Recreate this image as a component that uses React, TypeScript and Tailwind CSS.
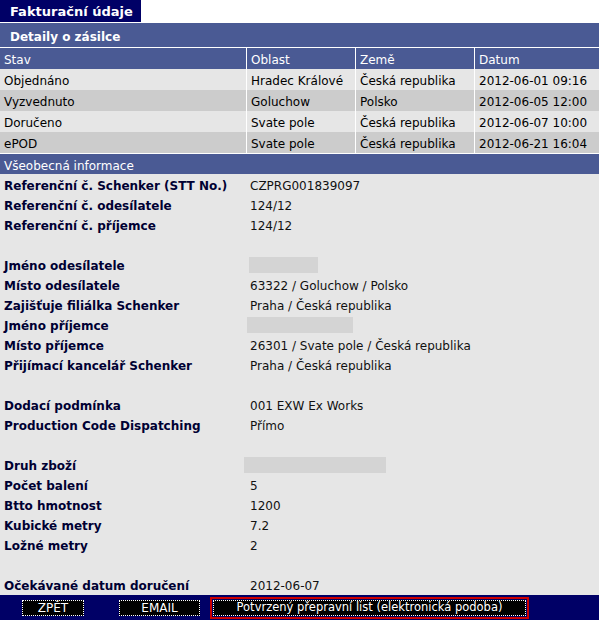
import React from "react";

const rows = [
  ["Objednáno", "Hradec Králové", "Česká republika", "2012-06-01 09:16"],
  ["Vyzvednuto", "Goluchow", "Polsko", "2012-06-05 12:00"],
  ["Doručeno", "Svate pole", "Česká republika", "2012-06-07 10:00"],
  ["ePOD", "Svate pole", "Česká republika", "2012-06-21 16:04"],
];

type Info = { l?: string; v?: string; box?: { ml: number; w: number } };
const info: Info[] = [
  { l: "Referenční č. Schenker (STT No.)", v: "CZPRG001839097" },
  { l: "Referenční č. odesílatele", v: "124/12" },
  { l: "Referenční č. příjemce", v: "124/12" },
  {},
  { l: "Jméno odesílatele", box: { ml: -1, w: 69 } },
  { l: "Místo odesílatele", v: "63322 / Goluchow / Polsko" },
  { l: "Zajišťuje filiálka Schenker", v: "Praha  / Česká republika" },
  { l: "Jméno příjemce", box: { ml: -3, w: 106 } },
  { l: "Místo příjemce", v: "26301 / Svate pole / Česká republika" },
  { l: "Přijímací kancelář Schenker", v: "Praha  / Česká republika" },
  {},
  { l: "Dodací podmínka", v: "001 EXW Ex Works" },
  { l: "Production Code Dispatching", v: "Přímo" },
  {},
  { l: "Druh zboží", box: { ml: -6, w: 142 } },
  { l: "Počet balení", v: "5" },
  { l: "Btto hmotnost", v: "1200" },
  { l: "Kubické metry", v: "7.2" },
  { l: "Ložné metry", v: "2" },
  {},
  { l: "Očekávané datum doručení", v: "2012-06-07" },
];

const widths = ["w-[247px]", "w-[109px]", "w-[119px]", "flex-1"];

export default function App() {
  return (
    <div
      className="w-[599px] h-[620px] bg-white text-[12px] text-black overflow-hidden flex flex-col"
      style={{ fontFamily: '"DejaVu Sans", Verdana, sans-serif' }}
    >
      <div className="h-[23px] flex">
        <div className="w-[141px] h-[22px] bg-[#000066] text-white font-bold text-[13px] pl-[10px] pt-[2px] flex items-center">
          Fakturační údaje
        </div>
      </div>
      <div className="h-[25px] bg-[#4a5a94] text-white font-bold text-[12px] pl-[10px] pt-[3px] flex items-center">
        Detaily o zásilce
      </div>
      <div className="h-px bg-white" />
      <div className="flex h-[21px] bg-[#4a5a94] text-white">
        {["Stav", "Oblast", "Země", "Datum"].map((h, i) => (
          <div
            key={h}
            className={`${widths[i]} pl-[4px] pt-[3px] flex items-center ${i < 3 ? "border-r border-white" : ""}`}
          >
            {h}
          </div>
        ))}
      </div>
      {rows.map((r, ri) => (
        <div key={ri} className={`flex h-[21px] ${ri % 2 ? "bg-[#cccccc]" : "bg-[#e6e6e6]"}`}>
          {r.map((c, i) => (
            <div
              key={i}
              className={`${widths[i]} pl-[4px] pt-[3px] flex items-center ${i < 3 ? "border-r border-white" : ""}`}
            >
              {c}
            </div>
          ))}
        </div>
      ))}
      <div className="h-px bg-white" />
      <div className="h-[20px] bg-[#4a5a94] text-white pl-[4px] pt-[3px] flex items-center">
        Všeobecná informace
      </div>
      <div className="flex-1 bg-[#e6e6e6] pt-[1px] flex flex-col">
        {info.map((it, i) => (
          <div key={i} className="h-[20px] flex items-center">
            <div className="w-[250px] pl-[4px] pt-[1px] font-bold text-[#000033]">{it.l}</div>
            {it.v && <div className="pt-[1px] text-[#111]">{it.v}</div>}
            {it.box && (
              <div className="h-[16px] bg-[#d4d4d4]" style={{ marginLeft: it.box.ml, width: it.box.w }} />
            )}
          </div>
        ))}
      </div>
      <div className="h-[25px] bg-[#000066] flex items-center">
        <button className="ml-[22px] w-[62px] h-[16px] bg-black text-white border border-dotted border-white flex items-center justify-center text-[12px] leading-none pt-[1px]">
          ZPĚT
        </button>
        <button className="ml-[35px] w-[81px] h-[16px] bg-black text-white border border-dotted border-white flex items-center justify-center text-[12px] leading-none pt-[1px]">
          EMAIL
        </button>
        <div className="ml-[10px] border-2 border-[#cc0000] p-px">
          <button className="w-[313px] h-[16px] bg-black text-white border border-dotted border-white flex items-center justify-center text-[11.5px] leading-none pt-[1px]">
            Potvrzený přepravní list (elektronická podoba)
          </button>
        </div>
      </div>
    </div>
  );
}
